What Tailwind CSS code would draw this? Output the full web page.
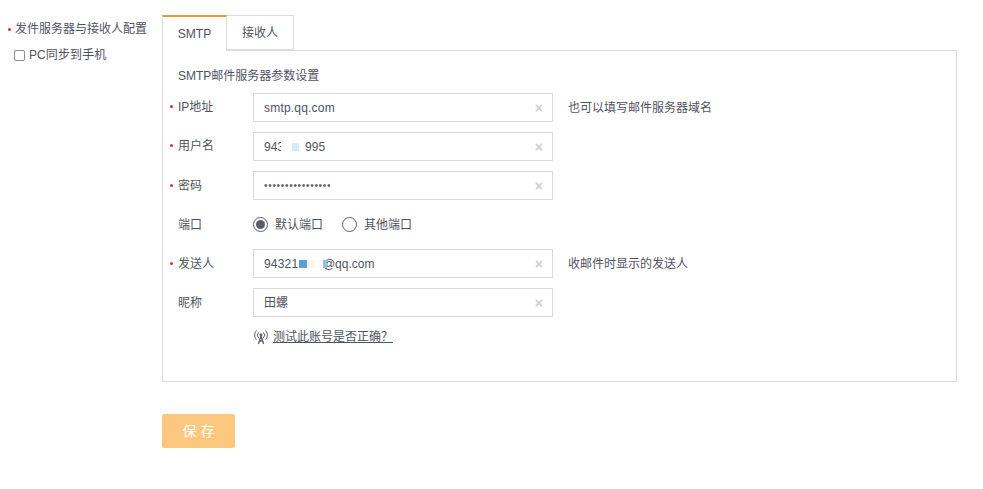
<!DOCTYPE html>
<html lang="zh">
<head>
  <meta charset="UTF-8">
  <title>SMTP</title>
  <script src="https://cdn.jsdelivr.net/npm/@tailwindcss/browser@4"></script>
</head>
<body class="bg-white text-[12px] leading-[16px] text-[#4f5260] font-['Liberation_Sans','Noto_Sans_CJK_SC',sans-serif]">
  <div class="flex h-[489px] w-[983px] overflow-hidden pt-[15px]">
    <!-- left column -->
    <div class="w-[162px] shrink-0">
      <div class="mt-[6px] flex h-[16px] items-center pl-[8px]">
        <span class="mr-[4px] h-[3px] w-[3px] rounded-full bg-[#d0342c]"></span>
        <span>发件服务器与接收人配置</span>
      </div>
      <label class="mt-[10px] flex h-[16px] items-center pl-[14px]">
        <span class="mr-[4px] h-[11px] w-[11px] rounded-[2px] border border-[#8a8a8a] bg-white"></span>
        <span class="tracking-[0.1px]">PC同步到手机</span>
      </label>
    </div>

    <!-- right column -->
    <div class="w-[795px] shrink-0">
      <div class="flex h-[36px]">
        <div class="z-10 flex h-[36px] w-[65px] items-center justify-center border-x border-[#dcdcdc] border-t-2 border-t-[#e8973a] bg-white">SMTP</div>
        <div class="flex h-[35px] w-[67px] items-center justify-center border-y border-r border-[#dcdcdc]">接收人</div>
      </div>
      <div class="-mt-px h-[332px] border border-[#dcdcdc] pl-[15px] pt-[17px]">
        <div class="h-[16px]">SMTP邮件服务器参数设置</div>

        <div class="mt-[9px] flex h-[29px] items-center">
          <span class="flex w-[75px] -translate-y-[1px] items-center"><span class="-ml-[8px] mr-[5px] h-[3px] w-[3px] rounded-full bg-[#d0342c]"></span>IP地址</span>
          <div class="flex h-[29px] w-[300px] items-center justify-between border border-[#d9d9d9] pl-[10px] pr-[9px]">
            <span class="tracking-[0.2px]">smtp.qq.com</span><span class="text-[14px] font-bold text-[#cfcfcf]">×</span>
          </div>
          <span class="ml-[15px]">也可以填写邮件服务器域名</span>
        </div>

        <div class="mt-[10px] flex h-[29px] items-center">
          <span class="flex w-[75px] -translate-y-[1px] items-center"><span class="-ml-[8px] mr-[5px] h-[3px] w-[3px] rounded-full bg-[#d0342c]"></span>用户名</span>
          <div class="flex h-[29px] w-[300px] items-center justify-between border border-[#d9d9d9] pl-[10px] pr-[9px]">
            <span class="flex items-center"><span>943</span><span class="relative -ml-[3px] h-[12px] w-[11px] bg-white"></span><span class="h-[8px] w-[7px] bg-[#d3edf8]"></span><span class="ml-[6px]">995</span></span><span class="text-[14px] font-bold text-[#cfcfcf]">×</span>
          </div>
        </div>

        <div class="mt-[10px] flex h-[29px] items-center">
          <span class="flex w-[75px] items-center"><span class="-ml-[8px] mr-[5px] h-[3px] w-[3px] rounded-full bg-[#d0342c]"></span>密码</span>
          <div class="flex h-[29px] w-[300px] items-center justify-between border border-[#d9d9d9] pl-[10px] pr-[9px]">
            <span class="text-[10px] tracking-[0.7px] text-[#5f6270]">••••••••••••••••</span><span class="text-[14px] font-bold text-[#cfcfcf]">×</span>
          </div>
        </div>

        <div class="mt-[10px] flex h-[29px] items-center">
          <span class="w-[75px]">端口</span>
          <span class="flex h-[15px] w-[15px] items-center justify-center rounded-full border border-[#5a5d6b]"><span class="h-[9px] w-[9px] rounded-full bg-[#5a5d6b]"></span></span>
          <span class="ml-[7px]">默认端口</span>
          <span class="ml-[19px] h-[15px] w-[15px] rounded-full border border-[#5a5d6b]"></span>
          <span class="ml-[7px]">其他端口</span>
        </div>

        <div class="mt-[10px] flex h-[29px] items-center">
          <span class="flex w-[75px] items-center"><span class="-ml-[8px] mr-[5px] h-[3px] w-[3px] rounded-full bg-[#d0342c]"></span>发送人</span>
          <div class="flex h-[29px] w-[300px] items-center justify-between border border-[#d9d9d9] pl-[10px] pr-[9px]">
            <span class="flex items-center"><span class="tracking-[0.2px]">94321</span><span class="ml-[1px] h-[8px] w-[8px] bg-[#5b9fd6]"></span><span class="h-[8px] w-[8px] bg-[#fbf8e4]"></span><span class="relative z-10 ml-[8px] h-[8px] w-[4px] bg-[#8fc0e6]"></span><span class="-ml-[4.5px]">@qq.com</span></span><span class="text-[14px] font-bold text-[#cfcfcf]">×</span>
          </div>
          <span class="ml-[15px]">收邮件时显示的发送人</span>
        </div>

        <div class="mt-[10px] flex h-[29px] items-center">
          <span class="w-[75px]">昵称</span>
          <div class="flex h-[29px] w-[300px] items-center justify-between border border-[#d9d9d9] pl-[10px] pr-[9px]">
            <span>田螺</span><span class="text-[14px] font-bold text-[#cfcfcf]">×</span>
          </div>
        </div>

        <div class="ml-[75px] mt-[12px] flex h-[16px] items-center">
          <svg class="mr-[4px]" width="16" height="16" viewBox="0 0 16 16" fill="none" stroke="#5a5d6b" stroke-width="1" stroke-linecap="round">
            <circle cx="8" cy="6" r="1.4" fill="#5a5d6b" stroke="none"/>
            <path d="M5.4 3.6a3.6 3.6 0 0 0 0 5M10.6 3.6a3.6 3.6 0 0 1 0 5M3.2 1.8a6.2 6.2 0 0 0 0 8.6M12.8 1.8a6.2 6.2 0 0 1 0 8.6"/>
            <path d="M8 7 5.5 14.5M8 7 10.5 14.5M6.5 12h3" stroke-width="1.3"/>
          </svg>
          <span class="underline underline-offset-[1px]">测试此账号是否正确？</span>
        </div>
      </div>

      <button class="mt-[32px] block h-[34px] w-[73px] rounded-[2px] border border-[#f8c782] bg-[#fcc880] text-[14px] text-white">保 存</button>
    </div>
  </div>
</body>
</html>
